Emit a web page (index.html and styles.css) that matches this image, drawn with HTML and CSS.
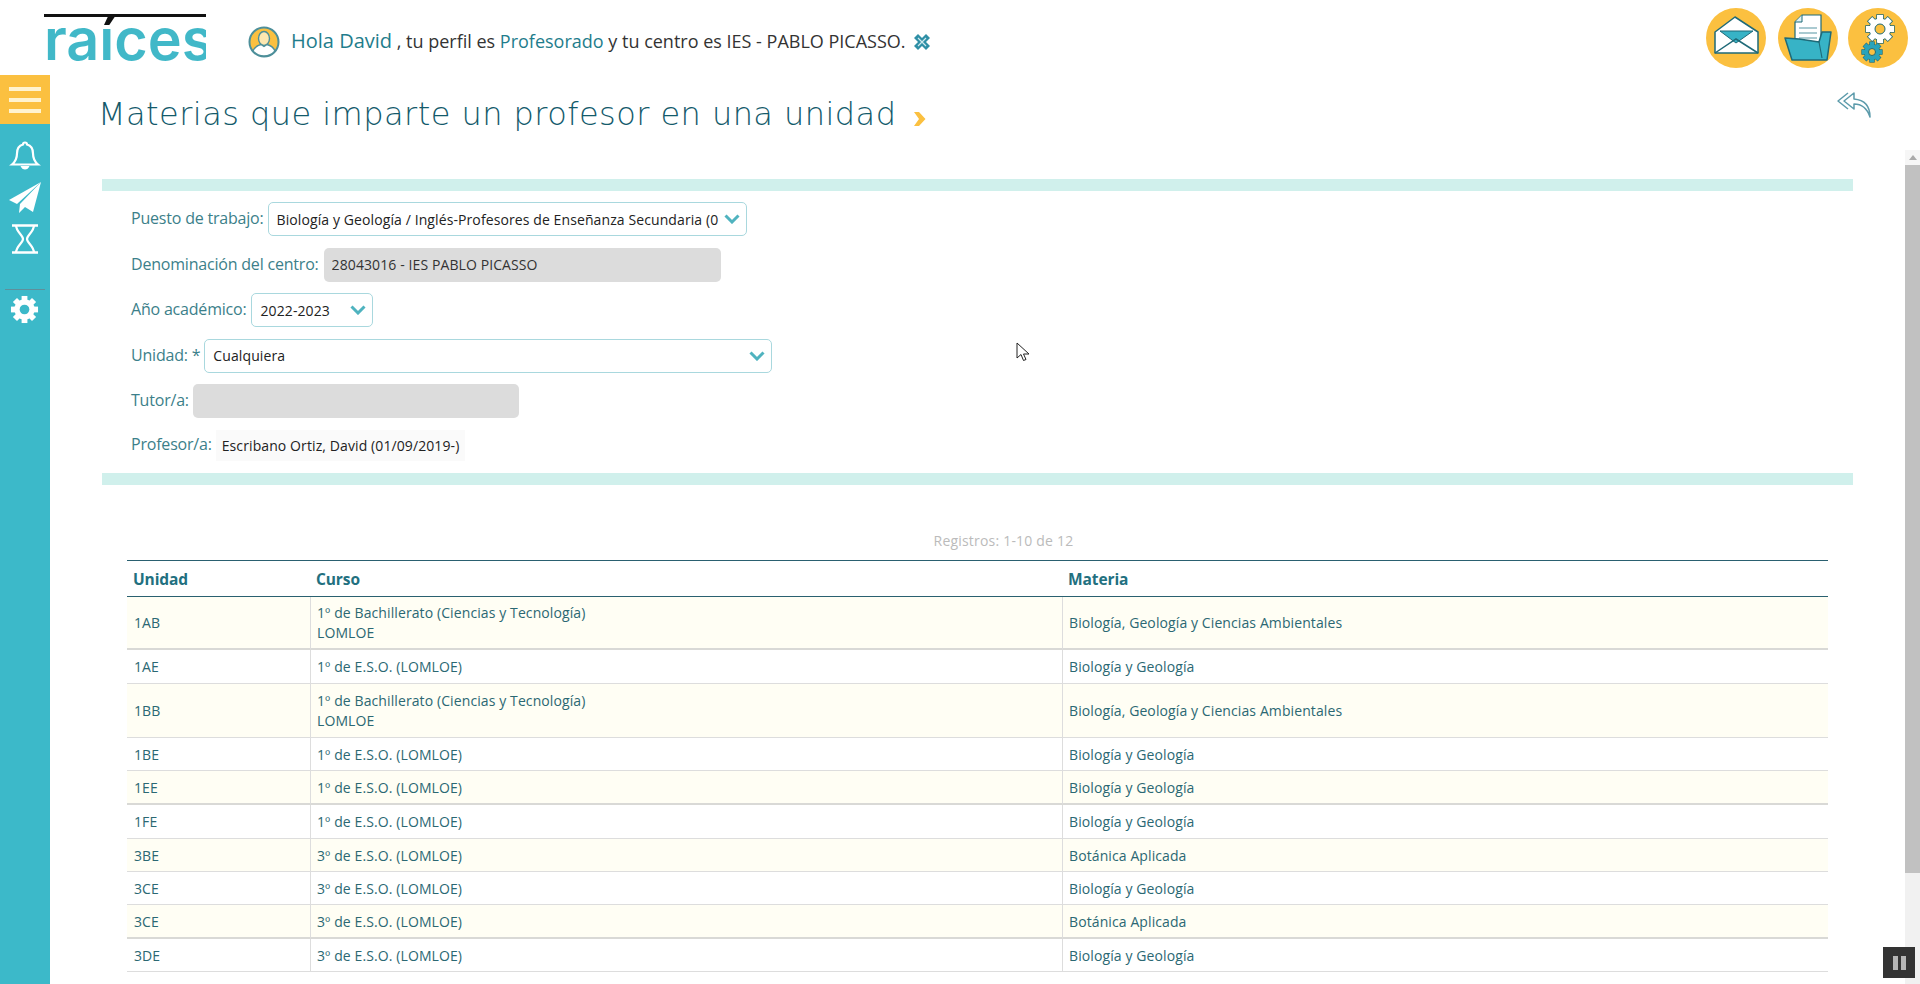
FILE: index.html
```html
<!DOCTYPE html>
<html lang="es">
<head>
<meta charset="utf-8">
<title>Materias que imparte un profesor en una unidad</title>
<link rel="stylesheet" href="styles.css">
</head>
<body>
<svg class="defs" width="0" height="0"><defs><g id="cog"><rect x="-3" y="-14" width="6" height="28"/><rect x="-3" y="-14" width="6" height="28" transform="rotate(45)"/><rect x="-3" y="-14" width="6" height="28" transform="rotate(90)"/><rect x="-3" y="-14" width="6" height="28" transform="rotate(135)"/><circle r="10.500"/></g></defs></svg>
<header class="top">
  <div class="logo">raíces</div>
  <svg class="avatar" viewBox="0 0 32 32" width="32" height="32"><circle cx="16" cy="16" r="14.5" fill="#fbc040" stroke="#4d8f9a" stroke-width="2"/><ellipse cx="16" cy="12.5" rx="5.5" ry="7" fill="#fde7b0" stroke="#4d8f9a" stroke-width="1.4"/><path d="M5 25c2-5 6-6 8-6.500l3 2 3-2c2 .5 6 1.500 8 6.500-3 3.500-7 5-11 5s-8-1.500-11-5z" fill="#fff" stroke="#4d8f9a" stroke-width="1.4"/></svg>
  <p class="greet"><a class="hello">Hola David</a> , tu perfil es <a class="link">Profesorado</a> y tu centro es IES - PABLO PICASSO.</p>
  <svg class="close" viewBox="0 0 18 18" width="18" height="18"><path d="M1 5 5 1 9 5 13 1 17 5 13 9 17 13 13 17 9 13 5 17 1 13 5 9z" fill="#2f8fa6"/><path d="M5 5l8 8M13 5l-8 8" stroke="#cfe9ee" stroke-width="1.200"/></svg>
  <nav class="quick">
    <svg viewBox="0 0 60 60" width="60" height="60"><circle cx="30" cy="30" r="30" fill="#fbc040"/><path d="M9 24 29 9l23 15v21H9z" fill="#fff" stroke="#1f6a78" stroke-width="1.500" stroke-linejoin="round"/><path d="M14 23h33L30 35z" fill="#37b3c6" stroke="#1f6a78" stroke-width="1"/><path d="M9 45l21-14 22 14" fill="none" stroke="#1f6a78" stroke-width="1.500"/></svg>
    <svg class="folder" viewBox="0 0 60 60" width="60" height="60"><circle cx="30" cy="30" r="30" fill="#fbc040"/><path d="M24 7h19v33H17V14z" fill="#fff" stroke="#1f6a78" stroke-width="1.200"/><path d="M24 7v7h-7" fill="#dff1f4" stroke="#1f6a78" stroke-width="1"/><path d="M21 20h18M21 25h18M21 30h18M21 35h18" stroke="#8fb9c2" stroke-width="1.500"/><path d="M7 30l14 1 20 3 3-10h9l-4 28H14z" fill="#37b3c6" stroke="#1f6a78" stroke-width="1.500" stroke-linejoin="round"/><path d="M41 34l3 16" stroke="#1f6a78" stroke-width="1.200"/></svg>
    <svg viewBox="0 0 60 60" width="60" height="60"><circle cx="30" cy="30" r="30" fill="#fbc040"/><use href="#cog" transform="translate(32 21)" fill="#1f6a78" stroke="#1f6a78" stroke-width="1.500"/><use href="#cog" transform="translate(32 21)" fill="#fff"/><circle cx="32" cy="21" r="5" fill="#fbc040" stroke="#1f6a78"/><use href="#cog" transform="translate(24 44) scale(.72)" fill="#1f6a78" stroke="#1f6a78" stroke-width="1.500"/><use href="#cog" transform="translate(24 44) scale(.72)" fill="#2aa3ba"/><circle cx="24" cy="44" r="3.500" fill="#fbc040" stroke="#1f6a78"/></svg>
  </nav>
</header>
<div class="shell">
  <aside class="side">
    <div class="burger"><i></i><i></i><i></i></div>
    <svg class="ic-bell" viewBox="0 0 32 32" width="32" height="32"><path d="M16 3.500c-1.500 0-2 1-2 2-4 1-6 4.500-6 9 0 5-1.500 8-5 11h26c-3.500-3-5-6-5-11 0-4.500-2-8-6-9 0-1-.5-2-2-2z" fill="none" stroke="#fff" stroke-width="2.200"/><path d="M11.500 27c1 2.500 2.500 3.500 4.500 3.500s3.500-1 4.500-3.500z" fill="#fff"/></svg>
    <svg class="ic-plane" viewBox="0 0 32 32" width="32" height="32"><path d="M32 0 0 18l8 4z" fill="#fff"/><path d="M32 0 11 22l-1 9 6-6 8 5z" fill="#fff"/></svg>
    <svg class="ic-glass" viewBox="0 0 28 30" width="28" height="30"><path d="M1 1.500h26M1 28.500h26" stroke="#fff" stroke-width="2.500"/><path d="M5 1c0 7 7 10 7 14S5 22 5 29M23 1c0 7-7 10-7 14s7 7 7 14" fill="none" stroke="#fff" stroke-width="2.200"/></svg>
    <div class="side-rule"></div>
    <svg class="ic-gear" viewBox="0 0 30 30" width="29" height="29"><use href="#cog" transform="translate(15 15)" fill="#fff"/><circle cx="15" cy="15" r="5" fill="#3cb9c9"/></svg>
  </aside>
  <main class="main">
    <div class="title-row">
      <h1 class="title">Materias que imparte un profesor en una unidad <svg class="title-arrow" viewBox="0 0 13 16" width="13" height="16"><path d="M1 1h5l6.500 7L6 15H1l5-7z" fill="#fbc040"/></svg></h1>
      <svg class="back" viewBox="0 0 36 26" width="36" height="26"><path d="M12 1 2 9l10 8M18 1 8 9l10 8V12c8 0 13 4 16 13 0-10-5-17-16-18z" fill="none" stroke="#5c9bab" stroke-width="1.500" stroke-linejoin="round"/></svg>
    </div>
    <div class="scroll">
      <div class="content">
        <section class="form">
          <div class="row"><label>Puesto de trabajo:</label><div class="field sel w1"><span>Biología y Geología / Inglés-Profesores de Enseñanza Secundaria (01/09/2019-)</span><svg class="chev" viewBox="0 0 16 10" width="16" height="10"><path d="M1.500 1.500 8 8l6.500-6.500" fill="none" stroke="#4fb3bf" stroke-width="3"/></svg></div></div>
          <div class="row"><label>Denominación del centro:</label><div class="field off w2"><span>28043016 - IES PABLO PICASSO</span></div></div>
          <div class="row"><label>Año académico:</label><div class="field sel w3"><span>2022-2023</span><svg class="chev" viewBox="0 0 16 10" width="16" height="10"><path d="M1.500 1.500 8 8l6.500-6.500" fill="none" stroke="#4fb3bf" stroke-width="3"/></svg></div></div>
          <div class="row"><label>Unidad: *</label><div class="field sel w4"><span>Cualquiera</span><svg class="chev" viewBox="0 0 16 10" width="16" height="10"><path d="M1.500 1.500 8 8l6.500-6.500" fill="none" stroke="#4fb3bf" stroke-width="3"/></svg></div></div>
          <div class="row"><label>Tutor/a:</label><div class="field off w5"></div></div>
          <div class="row last"><label>Profesor/a:</label><div class="plain">Escribano Ortiz, David (01/09/2019-)</div></div>
        </section>
        <p class="count">Registros: 1-10 de 12</p>
        <table class="grid">
          <colgroup><col class="c1"><col class="c2"><col class="c3"></colgroup>
          <thead><tr><th>Unidad</th><th>Curso</th><th>Materia</th></tr></thead>
          <tbody>
            <tr class="odd h53 thick"><td>1AB</td><td>1º de Bachillerato (Ciencias y Tecnología)<br>LOMLOE</td><td>Biología, Geología y Ciencias Ambientales</td></tr>
            <tr class="h34"><td>1AE</td><td>1º de E.S.O. (LOMLOE)</td><td>Biología y Geología</td></tr>
            <tr class="odd h54"><td>1BB</td><td>1º de Bachillerato (Ciencias y Tecnología)<br>LOMLOE</td><td>Biología, Geología y Ciencias Ambientales</td></tr>
            <tr class="h33"><td>1BE</td><td>1º de E.S.O. (LOMLOE)</td><td>Biología y Geología</td></tr>
            <tr class="odd h34 thick"><td>1EE</td><td>1º de E.S.O. (LOMLOE)</td><td>Biología y Geología</td></tr>
            <tr class="h34"><td>1FE</td><td>1º de E.S.O. (LOMLOE)</td><td>Biología y Geología</td></tr>
            <tr class="odd h33"><td>3BE</td><td>3º de E.S.O. (LOMLOE)</td><td>Botánica Aplicada</td></tr>
            <tr class="h33"><td>3CE</td><td>3º de E.S.O. (LOMLOE)</td><td>Biología y Geología</td></tr>
            <tr class="odd h34 thick"><td>3CE</td><td>3º de E.S.O. (LOMLOE)</td><td>Botánica Aplicada</td></tr>
            <tr class="h33"><td>3DE</td><td>3º de E.S.O. (LOMLOE)</td><td>Biología y Geología</td></tr>
          </tbody>
        </table>
      </div>
      <div class="bar"><div class="bar-up"></div><div class="bar-thumb"></div></div>
    </div>
  </main>
</div>
<svg class="cursor" viewBox="0 0 14 20" width="14" height="20"><path d="M1 1v15l4-3.500 2.500 6 2.500-1-2.500-5.500H13z" fill="#fff" stroke="#222" stroke-width="1"/></svg>
<div class="pause"><i></i><i></i></div>
</body>
</html>
```
FILE: styles.css
```css
* { box-sizing: border-box; }
html, body { margin: 0; height: 984px; overflow: hidden; }
body { font-family: "Open Sans", "Liberation Sans", sans-serif; font-size: 14px; color: #333; background: #fff; position: relative; }
.defs { position: absolute; }

.top { height: 75px; display: flex; align-items: center; }
.logo { position: relative; width: 162px; margin: 3px 0 0 44px; height: 60px; font-family: Inter, "Open Sans", sans-serif; font-weight: 600; font-size: 57.5px; line-height: 60px; white-space: nowrap; color: transparent; background: linear-gradient(#111 0 16px, #41b8c8 16px); -webkit-background-clip: text; background-clip: text; }
.logo::before { content: ""; position: absolute; left: 0; right: 0; top: 5px; height: 3px; background: #111; }
.avatar { margin-left: 42px; margin-top: 9px; flex: none; }
.greet { margin: 5px 0 0 11px; font-size: 18px; letter-spacing: 0; color: #333; white-space: nowrap; }
.hello { font-size: 20px; color: #1f7d8c; }
.link { color: #1f7d8c; }
.close { margin-left: 7px; margin-top: 8px; flex: none; }
.quick { margin-left: auto; margin-right: 12px; display: flex; gap: 11px; margin-top: 1px; }
.folder { margin: 0 -1px 0 1px; }

.shell { display: flex; height: 909px; }
.side { width: 50px; flex: none; background: #3cb9c9; display: flex; flex-direction: column; align-items: center; }
.burger { width: 100%; height: 49px; background: #fbc040; display: flex; flex-direction: column; gap: 7px; padding: 12px 9px 0; }
.burger i { display: block; height: 4px; background: #fff3cf; }
.ic-bell { margin-top: 15px; margin-left: -1px; }
.ic-plane { margin-top: 11px; margin-left: 0; }
.ic-glass { margin-top: 10px; margin-left: -1px; }
.side-rule { width: 40px; height: 1px; background: #5f8f9b; margin-top: 35px; }
.ic-gear { margin-top: 5px; margin-left: -1px; }

.main { flex: 1; min-width: 0; display: flex; flex-direction: column; }
.title-row { height: 75px; flex: none; display: flex; justify-content: space-between; padding: 0 48px 0 48px; }
.title { margin: 17px 0 0; font-family: "DejaVu Sans", "Open Sans", sans-serif; font-weight: 200; font-size: 32px; letter-spacing: .45px; line-height: 44px; color: #135a6b; white-space: nowrap; }
.title-arrow { margin-left: 6px; vertical-align: -2px; }
.back { margin-top: 17px; }

.scroll { flex: 1; min-height: 0; display: flex; }
.content { flex: 1; min-width: 0; padding: 29px 52px 0; }
.bar { width: 15px; flex: none; background: #f1f1f1; }
.bar-up { height: 15px; background: #f6f6f6; position: relative; }
.bar-up::after { content: ""; position: absolute; left: 4px; top: 5px; border: 4px solid transparent; border-top: 0; border-bottom: 5px solid #aaa; }
.bar-thumb { height: 708px; background: #c1c1c1; }

.form { border-top: 12px solid #d0f0ec; border-bottom: 12px solid #d0f0ec; padding: 11px 0 12px 29px; display: flex; flex-direction: column; gap: 11.6px; }
.row { height: 34px; display: flex; align-items: center; }
.row.last { height: 31px; }
.row label { color: #3c7f8a; font-size: 16px; letter-spacing: -.2px; white-space: nowrap; margin-right: 4px; padding-bottom: 2px; }
.field { height: 100%; border-radius: 5px; padding: 0 8px; display: flex; align-items: center; font-size: 14px; letter-spacing: .1px; color: #222; }
.field span { flex: 1; min-width: 0; overflow: hidden; white-space: nowrap; }
.sel { border: 1px solid #a9d8de; background: #fff; padding-right: 6px; }
.chev { flex: none; margin-left: 5px; }
.off { background: #dcdcdc; color: #333; }
.w1 { width: 479px; }
.w2 { width: 397px; margin-left: 1px; }
.w3 { width: 122px; margin-left: 1px; }
.w4 { width: 568px; }
.w5 { width: 326px; }
.plain { height: 100%; background: #fafafa; padding: 0 6px; display: flex; align-items: center; font-size: 14px; letter-spacing: .1px; color: #222; }

.count { margin: 46px 0 9px; padding-left: 52px; line-height: 20px; text-align: center; color: #bbb; font-size: 14px; letter-spacing: .2px; }
.grid { width: 1701px; margin-left: 25px; border-collapse: separate; border-spacing: 0; table-layout: fixed; font-size: 14px; letter-spacing: .1px; color: #2b6873; }
.c1 { width: 183px; }
.c2 { width: 752px; }
.c3 { width: 766px; }
th { height: 37px; text-align: left; padding: 2px 6px 0; font-size: 15.5px; letter-spacing: -.1px; font-weight: 700; color: #22707f; border-top: 1px solid #2a6070; border-bottom: 1px solid #2a6070; }
td { padding: 2px 7px 0; line-height: 20px; border-bottom: 1px solid #ddd; }
td + td { border-left: 1px solid #ddd; padding-left: 6px; }
.odd td { background: #fffef4; }
.h33 td { height: 33px; }
.h34 td { height: 34px; }
.h53 td { height: 53px; }
.h54 td { height: 54px; }
.thick td { border-bottom: 2px solid #d9d9d6; }

.cursor { position: absolute; left: 1016px; top: 342px; }
.pause { position: absolute; left: 1883px; top: 947px; width: 32px; height: 31px; background: #333; display: flex; justify-content: center; align-items: center; gap: 3px; }
.pause i { width: 5px; height: 14px; background: #b5b5b5; }
```
